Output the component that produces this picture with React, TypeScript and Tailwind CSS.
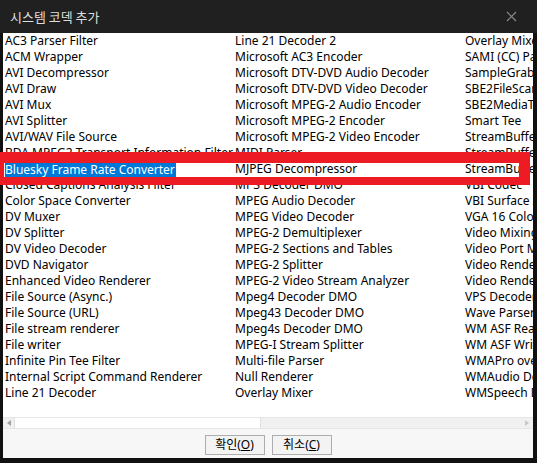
import React from 'react';

const col1 = [
  'AC3 Parser Filter',
  'ACM Wrapper',
  'AVI Decompressor',
  'AVI Draw',
  'AVI Mux',
  'AVI Splitter',
  'AVI/WAV File Source',
  'BDA MPEG2 Transport Information Filter',
  'Bluesky Frame Rate Converter',
  'Closed Captions Analysis Filter',
  'Color Space Converter',
  'DV Muxer',
  'DV Splitter',
  'DV Video Decoder',
  'DVD Navigator',
  'Enhanced Video Renderer',
  'File Source (Async.)',
  'File Source (URL)',
  'File stream renderer',
  'File writer',
  'Infinite Pin Tee Filter',
  'Internal Script Command Renderer',
  'Line 21 Decoder',
];

const col2 = [
  'Line 21 Decoder 2',
  'Microsoft AC3 Encoder',
  'Microsoft DTV-DVD Audio Decoder',
  'Microsoft DTV-DVD Video Decoder',
  'Microsoft MPEG-2 Audio Encoder',
  'Microsoft MPEG-2 Encoder',
  'Microsoft MPEG-2 Video Encoder',
  'MIDI Parser',
  'MJPEG Decompressor',
  'MP3 Decoder DMO',
  'MPEG Audio Decoder',
  'MPEG Video Decoder',
  'MPEG-2 Demultiplexer',
  'MPEG-2 Sections and Tables',
  'MPEG-2 Splitter',
  'MPEG-2 Video Stream Analyzer',
  'Mpeg4 Decoder DMO',
  'Mpeg43 Decoder DMO',
  'Mpeg4s Decoder DMO',
  'MPEG-I Stream Splitter',
  'Multi-file Parser',
  'Null Renderer',
  'Overlay Mixer',
];

const col3 = [
  'Overlay Mixer2',
  'SAMI (CC) Parser',
  'SampleGrabber',
  'SBE2FileScan',
  'SBE2MediaTypeProfile',
  'Smart Tee',
  'StreamBufferSink',
  'StreamBufferSink2',
  'StreamBufferSource',
  'VBI Codec',
  'VBI Surface Allocator',
  'VGA 16 Color Ditherer',
  'Video Mixing Renderer 9',
  'Video Port Manager',
  'Video Renderer',
  'Video Renderer',
  'VPS Decoder',
  'Wave Parser',
  'WM ASF Reader',
  'WM ASF Writer',
  'WMAPro over S/PDIF filter',
  'WMAudio Decoder DMO',
  'WMSpeech Decoder DMO',
];

const font = { fontFamily: "'Noto Sans', 'Noto Sans CJK KR', sans-serif" };

const Column: React.FC<{ items: string[]; selected?: number }> = ({ items, selected }) => (
  <div className="w-[230px] shrink-0 overflow-hidden">
    {items.map((name, i) => (
      <div key={i} className="h-4 flex items-center pl-[2px] whitespace-nowrap">
        <span
          className={
            i === selected
              ? 'bg-[#0078d7] text-white leading-4 h-[15px] pr-[1px]'
              : 'text-black leading-4'
          }
        >
          {name}
        </span>
      </div>
    ))}
  </div>
);

export default function App() {
  return (
    <div className="w-[537px] h-[463px] bg-[#111111] flex flex-col text-[12px]" style={font}>
      <div className="h-[33px] shrink-0 bg-[#202020] flex items-center justify-between pl-[10px] pr-[20px]">
        <span className="text-[#dedede] text-[13px]" style={{ fontFamily: "'Noto Sans CJK KR', sans-serif" }}>
          시스템 코덱 추가
        </span>
        <svg width="11" height="11" viewBox="0 0 11 11">
          <path d="M1 1L10 10M10 1L1 10" stroke="#8a8a8a" strokeWidth="1.2" />
        </svg>
      </div>
      <div className="flex-1 flex flex-col ml-[3px] mr-[4px] mb-[5px] bg-[#f7f7f7]">
        <div className="relative h-[384px] bg-white flex overflow-hidden">
          <Column items={col1} selected={8} />
          <Column items={col2} />
          <Column items={col3} />
        </div>
        <div className="h-[12px] flex border-y border-[#e6e6e6] bg-[#f0f0f0]">
          <div className="w-[11px] flex items-center justify-center">
            <svg width="4" height="6" viewBox="0 0 4 6">
              <path d="M4 0L0 3L4 6Z" fill="#a0a0a0" />
            </svg>
          </div>
          <div className="w-[247px] bg-white border-x border-[#e0e0e0]" />
          <div className="flex-1" />
          <div className="w-[13px] flex items-center justify-center">
            <svg width="4" height="6" viewBox="0 0 4 6">
              <path d="M0 0L4 3L0 6Z" fill="#c8c8c8" />
            </svg>
          </div>
        </div>
        <div className="flex-1 flex items-center justify-center gap-[7px] pt-[2px]">
          <button className="w-[60px] h-[20px] border border-[#adadad] bg-[#f3f3f3] text-black text-[12px] leading-none">
            확인(<span className="underline">O</span>)
          </button>
          <button className="w-[60px] h-[20px] border border-[#adadad] bg-[#f3f3f3] text-black text-[12px] leading-none">
            취소(<span className="underline">C</span>)
          </button>
        </div>
      </div>
      <div className="absolute left-0 top-[152px] w-[530px] h-[33px] border-[#ed1c24] border-t-[11px] border-b-[8px] border-l-[4px] border-r-[11px] pointer-events-none" />
    </div>
  );
}
